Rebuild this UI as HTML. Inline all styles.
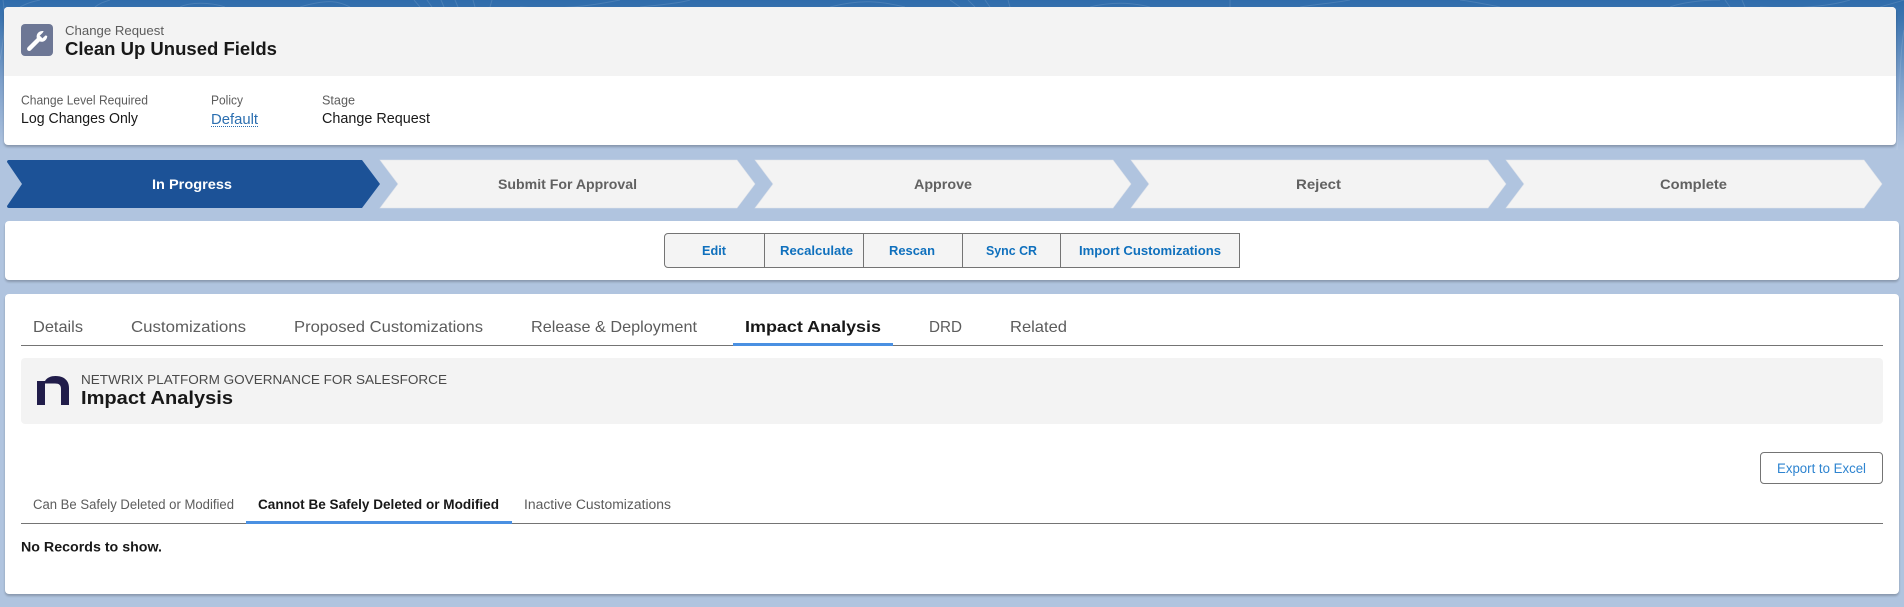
<!DOCTYPE html>
<html lang="en"><head><meta charset="utf-8"><title>Change Request</title>
<style>
html,body{margin:0;padding:0}
body{width:1904px;height:607px;overflow:hidden;position:relative;background:#b0c4df;font-family:"Liberation Sans",sans-serif}
.bg{position:absolute;left:0;top:0;width:1904px;height:175px;background:linear-gradient(180deg,#2f6cab 0,#3d75b0 20px,#7c9fca 80px,#b0c4df 150px)}
.card{position:absolute;background:#fff;border-radius:4px;box-shadow:0 2px 2px rgba(0,0,0,.22)}
.abs{position:absolute}
.btns{position:absolute;left:664px;top:233px;width:575px;height:33px;display:flex;border:1px solid #747474;border-radius:4px 0 0 4px;background:#f4f4f4;box-sizing:content-box}
.btns div{border-left:1px solid #747474;box-sizing:border-box;height:33px}
.btns div:first-child{border-left:0}
svg.o{position:absolute;left:0;top:0}
text{font-family:"Liberation Sans",sans-serif}
</style></head><body>
<div class="bg"></div>
<svg class="o" width="1904" height="150" fill="none" stroke="#fff" stroke-opacity=".12" stroke-width="1">
<path d="M0 60C4 40 6 20 3 0M1897 150C1900 100 1899 60 1904 30M1880 7C1890 4 1898 2 1904 0M20 7C26 4 30 2 40 0M95 7C100 3 104 2 110 0M180 7C190 2 210 2 225 7M300 7C330-2 340 2 350 7M420 7L414 0M432 7L427 0M444 7L441 0M458 7L455 0M475 7L473 0M490 7L492 0M520 7C560 10 590 6 620 0M640 7C660 5 680 3 690 0M830 7C860-1 880 1 905 7M960 7L950 0M975 7L968 0M990 7L985 0M1010 7L1008 0M1090 7C1110 2 1130 2 1150 7M1230 7V0M1300 7C1320 4 1340 2 1350 0M1500 7C1480 3 1470 1 1460 0M1670 7C1680 3 1700 0 1720 0M1730 7L1725 0M1745 7L1742 0M1760 7C1800 9 1830 6 1850 0"/>
</svg>

<!-- Header card -->
<div class="card" style="left:4px;top:7px;width:1892px;height:138px;overflow:hidden">
  <div class="abs" style="left:0;top:0;width:1892px;height:69px;background:#f3f3f3"></div>
</div>
<div class="abs" style="left:21px;top:24px;width:32px;height:32px;background:#6d7795;border-radius:4px"></div>

<!-- Path -->
<svg class="o" width="1904" height="240">
<path d="M9 160H362L380 184L362 208H9Q7 208 7 206L22 184L7 162Q7 160 9 160Z" fill="#1c5297"/>
<g fill="#f3f3f3" stroke="#dfe3ea" stroke-width=".6">
<path d="M380 160H737L755 184L737 208H380L398 184Z"/>
<path d="M755 160H1113L1131 184L1113 208H755L773 184Z"/>
<path d="M1131 160H1488L1506 184L1488 208H1131L1149 184Z"/>
<path d="M1506 160H1864L1882 184L1864 208H1506L1524 184Z"/>
</g>
</svg>

<!-- Buttons card -->
<div class="card" style="left:5px;top:221px;width:1894px;height:59px"></div>
<div class="btns" style="width:574px">
  <div style="width:98.500px"></div><div style="width:99px"></div><div style="width:99px"></div><div style="width:98.500px"></div><div style="width:179px"></div>
</div>

<!-- Main card -->
<div class="card" style="left:5px;top:294px;width:1894px;height:300px"></div>
<div class="abs" style="left:21px;top:345px;width:1862px;height:1px;background:#747474"></div>
<div class="abs" style="left:733px;top:343px;width:160px;height:3px;background:#4a90e2"></div>
<div class="abs" style="left:21px;top:358px;width:1862px;height:66px;background:#f3f3f3;border-radius:4px"></div>
<div class="abs" style="left:21px;top:523px;width:1862px;height:1px;background:#747474"></div>
<div class="abs" style="left:246px;top:521px;width:266px;height:3px;background:#4a90e2"></div>
<div class="abs" style="left:1760px;top:452px;width:121px;height:30px;border:1px solid #747474;border-radius:4px;background:#fff"></div>

<!-- Icons and text -->
<svg class="o" width="1904" height="607">
<!-- wrench -->
<g transform="translate(4 6.200) scale(.87)">
<path d="M29 49L41 37" stroke="#fff" stroke-width="5" stroke-linecap="round" fill="none"/>
<path d="M44.500 30.500L41 34L44 37L47.800 33.500L49.700 34.200C49.600 38.500 46 41.400 42.300 40.800C38.600 40 36.700 36.400 37.800 33C38.900 29.600 42 28 45.600 28.600Z" fill="#fff"/>
</g>
<!-- logo -->
<path d="M37 381H45V405H37Z" fill="#211d4a"/>
<path d="M45 381C47 377.500 51 376 55.500 376C64 376 69 380.500 69 388V405H61V389C61 385 59 383.500 55 383.500H45Z" fill="#211d4a"/>

<g fill="#5c5c5c" font-size="13">
<text x="65" y="35" textLength="99" lengthAdjust="spacingAndGlyphs">Change Request</text>
<text x="21" y="104.500" font-size="12.500" textLength="127" lengthAdjust="spacingAndGlyphs">Change Level Required</text>
<text x="211" y="104.500" font-size="12.500" textLength="32" lengthAdjust="spacingAndGlyphs">Policy</text>
<text x="322" y="104.500" font-size="12.500" textLength="33" lengthAdjust="spacingAndGlyphs">Stage</text>
</g>
<text x="65" y="55" font-size="18" font-weight="700" fill="#181818" textLength="212" lengthAdjust="spacingAndGlyphs">Clean Up Unused Fields</text>
<g fill="#181818" font-size="14.500">
<text x="21" y="123" textLength="117" lengthAdjust="spacingAndGlyphs">Log Changes Only</text>
<text x="322" y="123" textLength="108" lengthAdjust="spacingAndGlyphs">Change Request</text>
</g>
<text x="211" y="124" font-size="14.500" fill="#2a6eb0" textLength="47" lengthAdjust="spacingAndGlyphs">Default</text>
<path d="M211 126.500H258" stroke="#2a6eb0" stroke-width="1" stroke-dasharray="1 1" fill="none"/>

<!-- path labels -->
<text x="152" y="189" font-size="14" font-weight="700" fill="#fff" textLength="80" lengthAdjust="spacingAndGlyphs">In Progress</text>
<g fill="#616161" font-size="14" font-weight="700">
<text x="498" y="189" textLength="139" lengthAdjust="spacingAndGlyphs">Submit For Approval</text>
<text x="914" y="189" textLength="58" lengthAdjust="spacingAndGlyphs">Approve</text>
<text x="1296" y="189" textLength="45" lengthAdjust="spacingAndGlyphs">Reject</text>
<text x="1660" y="189" textLength="67" lengthAdjust="spacingAndGlyphs">Complete</text>
</g>

<!-- buttons -->
<g fill="#0f70bd" font-size="13" font-weight="700">
<text x="702" y="255" textLength="24" lengthAdjust="spacingAndGlyphs">Edit</text>
<text x="780" y="255" textLength="73" lengthAdjust="spacingAndGlyphs">Recalculate</text>
<text x="889" y="255" textLength="46" lengthAdjust="spacingAndGlyphs">Rescan</text>
<text x="986" y="255" textLength="51" lengthAdjust="spacingAndGlyphs">Sync CR</text>
<text x="1079" y="255" textLength="142" lengthAdjust="spacingAndGlyphs">Import Customizations</text>
</g>

<!-- tabs -->
<g fill="#5c5c5c" font-size="16">
<text x="33" y="332" textLength="50" lengthAdjust="spacingAndGlyphs">Details</text>
<text x="131" y="332" textLength="115" lengthAdjust="spacingAndGlyphs">Customizations</text>
<text x="294" y="332" textLength="189" lengthAdjust="spacingAndGlyphs">Proposed Customizations</text>
<text x="531" y="332" textLength="166" lengthAdjust="spacingAndGlyphs">Release &amp; Deployment</text>
<text x="929" y="332" textLength="33" lengthAdjust="spacingAndGlyphs">DRD</text>
<text x="1010" y="332" textLength="57" lengthAdjust="spacingAndGlyphs">Related</text>
</g>
<text x="745" y="332" font-size="16" font-weight="700" fill="#181818" textLength="136" lengthAdjust="spacingAndGlyphs">Impact Analysis</text>

<!-- banner -->
<text x="81" y="384" font-size="13" fill="#4a4a4a" textLength="366" lengthAdjust="spacingAndGlyphs">NETWRIX PLATFORM GOVERNANCE FOR SALESFORCE</text>
<text x="81" y="404" font-size="18" font-weight="700" fill="#181818" textLength="152" lengthAdjust="spacingAndGlyphs">Impact Analysis</text>

<!-- export -->
<text x="1777" y="473" font-size="13.500" fill="#2e84d0" textLength="89" lengthAdjust="spacingAndGlyphs">Export to Excel</text>

<!-- sub tabs -->
<g fill="#5c5c5c" font-size="13.500">
<text x="33" y="509" textLength="201" lengthAdjust="spacingAndGlyphs">Can Be Safely Deleted or Modified</text>
<text x="524" y="509" textLength="147" lengthAdjust="spacingAndGlyphs">Inactive Customizations</text>
</g>
<text x="258" y="509" font-size="13.500" font-weight="700" fill="#181818" textLength="241" lengthAdjust="spacingAndGlyphs">Cannot Be Safely Deleted or Modified</text>
<text x="21" y="551.500" font-size="13.500" font-weight="700" fill="#181818" textLength="141" lengthAdjust="spacingAndGlyphs">No Records to show.</text>
</svg>
</body></html>
